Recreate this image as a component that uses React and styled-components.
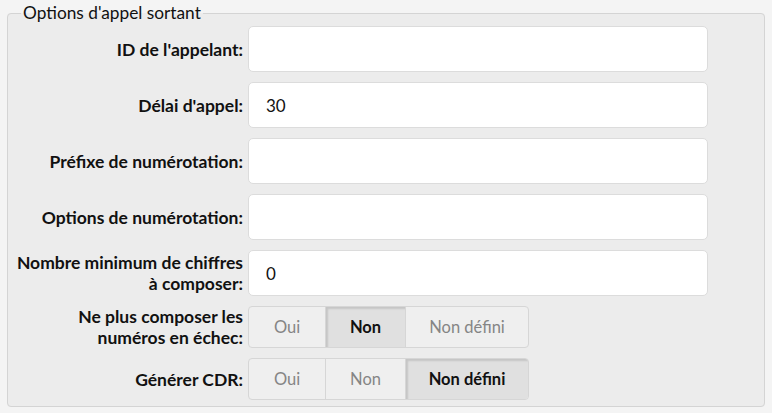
import React, { useState } from 'react';
import styled, { createGlobalStyle } from 'styled-components';

const GlobalStyle = createGlobalStyle`
  body {
    margin: 0;
    background: #f4f4f4;
    font-family: Lato, "Open Sans", sans-serif;
    color: #111;
  }
`;

const Page = styled.div`
  padding: 3px 7px 7px 7px;
`;

const Fieldset = styled.fieldset`
  margin: 0;
  padding: 0;
  border: 1px solid #d4d4d4;
  border-radius: 4px;
  background: #ececec;
  min-width: 0;
`;

const Legend = styled.legend`
  margin-left: 13px;
  padding: 0 2px;
  font-size: 17.3px;
  line-height: 20px;
  color: #111;
`;

const Form = styled.div`
  display: grid;
  grid-template-columns: 235px 460px;
  column-gap: 5px;
  row-gap: 10px;
  padding: 3px 0 6px 0;
`;

const Label = styled.label`
  justify-self: end;
  align-self: center;
  text-align: right;
  font-weight: 700;
  font-size: 17.5px;
  line-height: 21px;
  white-space: nowrap;
`;

const Input = styled.input`
  box-sizing: border-box;
  width: 100%;
  height: 46px;
  margin: 0;
  padding: 0 17px;
  border: 1px solid #dcdcdc;
  border-radius: 5px;
  background: #fff;
  font-family: inherit;
  font-size: 17px;
  color: #111;
  outline: none;
`;

const Toggle = styled.div`
  display: flex;
  justify-self: start;
  height: 42px;
  box-sizing: border-box;
  border: 1px solid #d6d6d6;
  border-radius: 4px;
  overflow: hidden;
  background: #efefef;
`;

const Choice = styled.button`
  width: ${p => p.$w}px;
  margin: 0;
  padding: 0;
  border: none;
  border-left: ${p => (p.$first ? 'none' : '1px solid #d6d6d6')};
  background: ${p => (p.$on ? '#e0e0e0' : 'transparent')};
  box-shadow: ${p => (p.$on ? 'inset 2px 2px 2px rgba(0,0,0,0.12)' : 'none')};
  font-family: inherit;
  font-size: 16.5px;
  font-weight: ${p => (p.$on ? 700 : 400)};
  color: ${p => (p.$on ? '#111' : '#858585')};
  cursor: pointer;
`;

const choices = [
  { v: 'oui', text: 'Oui', w: 76 },
  { v: 'non', text: 'Non', w: 80 },
  { v: 'undef', text: 'Non défini', w: 123 },
];

const Segmented = ({ value, onChange }) => (
  <Toggle>
    {choices.map((c, i) => (
      <Choice
        key={c.v}
        $w={c.w}
        $first={i === 0}
        $on={value === c.v}
        onClick={() => onChange(c.v)}
      >
        {c.text}
      </Choice>
    ))}
  </Toggle>
);

export default function App() {
  const [noRedial, setNoRedial] = useState('non');
  const [cdr, setCdr] = useState('undef');

  return (
    <Page>
      <GlobalStyle />
      <Fieldset>
        <Legend>Options d'appel sortant</Legend>
        <Form>
          <Label>ID de l'appelant:</Label>
          <Input defaultValue="" />

          <Label>Délai d'appel:</Label>
          <Input defaultValue="30" />

          <Label>Préfixe de numérotation:</Label>
          <Input defaultValue="" />

          <Label>Options de numérotation:</Label>
          <Input defaultValue="" />

          <Label>
            Nombre minimum de chiffres
            <br />à composer:
          </Label>
          <Input defaultValue="0" />

          <Label>
            Ne plus composer les
            <br />numéros en échec:
          </Label>
          <Segmented value={noRedial} onChange={setNoRedial} />

          <Label>Générer CDR:</Label>
          <Segmented value={cdr} onChange={setCdr} />
        </Form>
      </Fieldset>
    </Page>
  );
}
